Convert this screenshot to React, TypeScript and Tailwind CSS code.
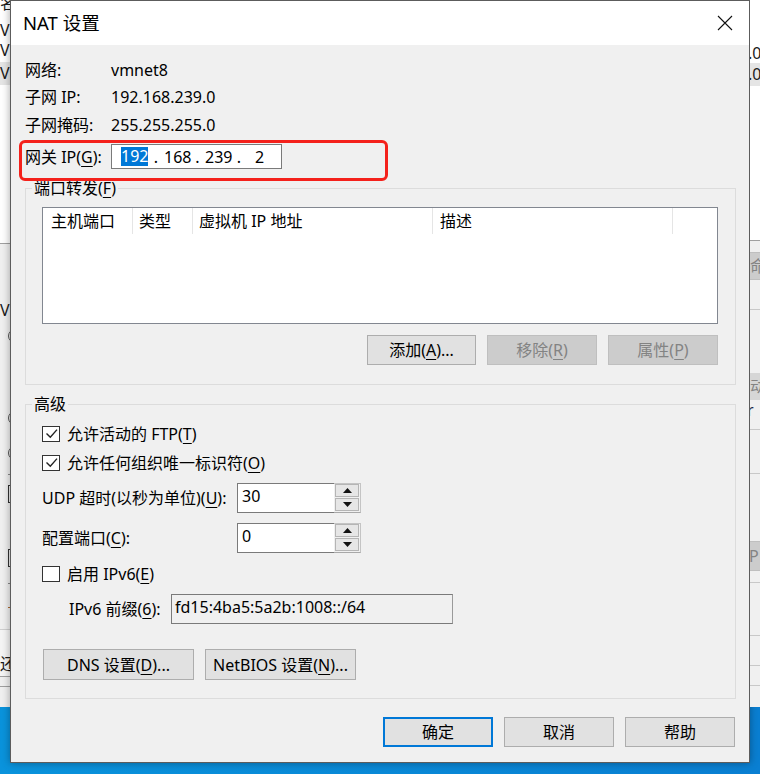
import React from 'react'

function Key({ children }: { children: React.ReactNode }) {
  return <u className="underline underline-offset-[3px] decoration-1">{children}</u>
}

function Check({ checked }: { checked?: boolean }) {
  return (
    <span className="w-[18px] h-[16px] border border-[#333333] bg-white flex items-center justify-center shrink-0">
      {checked && (
        <svg width="16" height="14" viewBox="0 0 16 14">
          <path d="M3.5 6.5 L7.3 10.3 L14 2.6" fill="none" stroke="#222222" strokeWidth="1.4" />
        </svg>
      )}
    </span>
  )
}

function Spin({ value }: { value: string }) {
  return (
    <div className="w-[124px] h-[30px] flex">
      <div className="flex-1 bg-white border-y border-l border-[#7a7a7a] pl-[4px] pt-[1px] leading-[22px]">
        {value}
      </div>
      <div className="w-[27px] border-y border-r border-[#c4c4c4] border-b-[#a8a8a8] bg-[#f0f0f0] flex flex-col gap-[1px] px-[1px]">
        <div className="h-[13px] w-[24px] bg-[#e6e6e6] border border-[#b5b5b5] flex items-center justify-center">
          <svg width="9" height="5" viewBox="0 0 9 5">
            <path d="M0 5 L4.5 0 L9 5 Z" fill="#111111" />
          </svg>
        </div>
        <div className="h-[13px] w-[24px] bg-[#e6e6e6] border border-[#b5b5b5] flex items-center justify-center">
          <svg width="9" height="5" viewBox="0 0 9 5">
            <path d="M0 0 L4.5 5 L9 0 Z" fill="#111111" />
          </svg>
        </div>
      </div>
    </div>
  )
}

function Radio() {
  return (
    <div className="h-[14px] flex items-center">
      <span className="ml-[8px] w-[14px] h-[14px] rounded-full border border-[#555555] shrink-0" />
    </div>
  )
}

function LeftStrip() {
  return (
    <div className="w-[10px] flex flex-col overflow-hidden text-[16px] text-[#1a1a1a] whitespace-nowrap">
      <div className="h-[243px] bg-white flex flex-col">
        <div className="h-[20px] overflow-hidden">
          <div className="leading-[20px] -mt-[7px]">名称</div>
        </div>
        <div className="h-[20px] leading-[20px]">VMnet0</div>
        <div className="h-[20px] leading-[20px]">VMnet1</div>
        <div className="h-[2px]" />
        <div className="h-[23px] leading-[23px] bg-[#e5e5e5]">VMnet8</div>
      </div>
      <div className="h-[464px] bg-[#f0f0f0] border-t border-[#a0a0a0] flex flex-col">
        <div className="h-[56px]" />
        <div className="h-[20px] leading-[20px]">VMnet</div>
        <div className="h-[9px]" />
        <Radio />
        <div className="h-[68px]" />
        <Radio />
        <div className="h-[21px]" />
        <Radio />
        <div className="h-[14px]" />
        <div className="h-[1px] ml-[8px] w-[4px] bg-[#8a8a8a]" />
        <div className="h-[10px]" />
        <div className="h-[18px] ml-[8px] w-[6px] border border-[#333333]" />
        <div className="h-[46px]" />
        <div className="h-[18px] ml-[8px] w-[6px] border border-[#333333]" />
        <div className="h-[16px]" />
        <div className="h-[1px] ml-[8px] w-[4px] bg-[#8a8a8a]" />
        <div className="h-[23px]" />
        <div className="h-[1px] ml-[8px] w-[4px] bg-[#b06a30]" />
        <div className="h-[21px]" />
        <div className="h-[48px] bg-[#f5f5f5] border-t border-[#cfcfcf] border-b border-b-[#a0a0a0] flex items-center">
          <span className="leading-[20px] mt-[22px]">还原</span>
        </div>
        <div className="h-[10px] border-b border-[#a0a0a0]" />
      </div>
    </div>
  )
}

function RightStrip() {
  return (
    <div className="w-[10px] flex flex-col overflow-hidden text-[16px] text-[#1a1a1a] whitespace-nowrap">
      <div className="h-[240px] bg-white flex flex-col">
        <div className="h-[43px]" />
        <div className="h-[20px] leading-[20px] -ml-[2px]">.0</div>
        <div className="h-[23px] leading-[23px] -ml-[2px] bg-[#e5e5e5]">.0</div>
      </div>
      <div className="h-[467px] bg-[#f0f0f0] border-t border-[#a0a0a0] flex flex-col">
        <div className="h-[11px]" />
        <div className="h-[28px] bg-[#cccccc] border-y border-[#bfbfbf] text-[#838383] leading-[26px]">命令</div>
        <div className="h-[30px] border-b border-[#c8c8c8]" />
        <div className="h-[63px]" />
        <div className="h-[27px] bg-[#d6d6d6] text-[#838383] leading-[27px]">动作</div>
        <div className="h-[20px] leading-[20px] text-[#1b2a4a] -ml-[3px]">r</div>
        <div className="h-[10px] border-b border-[#c8c8c8]" />
        <div className="h-[44px] border-b border-[#c8c8c8]" />
        <div className="h-[67px]" />
        <div className="h-[30px] bg-[#cccccc] border-y border-[#bfbfbf] text-[#838383] leading-[28px] -ml-[1px]">P</div>
        <div className="h-[12px] border-b border-[#c8c8c8]" />
        <div className="h-[53px] border-b border-[#c8c8c8]" />
        <div className="h-[30px] border-b border-[#c8c8c8]" />
        <div className="h-[20px] border-b border-[#c8c8c8]" />
      </div>
    </div>
  )
}

function Dialog() {
  return (
    <div className="w-[740px] h-[763px] border border-[#5c5c5c] flex flex-col bg-[#f0f0f0] shadow-[0_0_8px_rgba(0,0,0,0.35)]">
      {/* title bar */}
      <div className="h-[44px] bg-white flex items-center justify-between shrink-0">
        <div className="pl-[12px] text-[18.5px] leading-[24px] text-black">NAT 设置</div>
        <svg className="mr-[16px]" width="16" height="16" viewBox="0 0 16 16">
          <path d="M1 1 L15 15 M15 1 L1 15" stroke="#111111" strokeWidth="1.1" fill="none" />
        </svg>
      </div>

      <div className="flex-1 px-[14px] pt-[12px] text-[16px] leading-[20px] text-black">
        <div className="h-[26px] flex items-center">
          <span className="w-[86px]">网络:</span>
          <span>vmnet8</span>
        </div>
        <div className="h-[26px] mt-[1px] flex items-center">
          <span className="w-[86px]">子网 IP:</span>
          <span>192.168.239.0</span>
        </div>
        <div className="h-[26px] mt-[2px] flex items-center">
          <span className="w-[86px]">子网掩码:</span>
          <span>255.255.255.0</span>
        </div>

        <div className="relative h-[25px] mt-[6px] flex items-center">
          <span className="w-[86px]">
            网关 IP(<Key>G</Key>):
          </span>
          <div className="w-[171px] h-[25px] bg-white border border-[#7a7a7a] pl-[9px] flex items-center">
            <span className="w-[27px] h-[19px] bg-[#0078d7] text-white text-center leading-[19px]">192</span>
            <span className="w-[16px] text-center">.</span>
            <span className="w-[26px] text-center">168</span>
            <span className="w-[15px] text-center">.</span>
            <span className="w-[27px] text-center">239</span>
            <span className="w-[14px] text-center">.</span>
            <span className="w-[27px] text-center">2</span>
          </div>
          <div className="absolute left-[-6px] top-[-4px] w-[369px] h-[41px] border-[3px] border-[#f4211b] rounded-[6px]" />
        </div>

        {/* port forwarding */}
        <fieldset className="mt-[9px] w-[711px] border border-[#dcdcdc] pb-[19px]">
          <legend className="ml-[6px] px-[2px] leading-[20px]">
            端口转发(<Key>F</Key>)
          </legend>
          <div className="mt-[9px] ml-[16px] w-[676px] h-[117px] bg-white border border-[#828790]">
            <div className="h-[26px] flex">
              <div className="w-[90px] pl-[8px] pt-[3px] border-r border-[#e5e5e5]">主机端口</div>
              <div className="w-[60px] pl-[6px] pt-[3px] border-r border-[#e5e5e5]">类型</div>
              <div className="w-[240px] pl-[6px] pt-[3px] border-r border-[#e5e5e5]">虚拟机 IP 地址</div>
              <div className="w-[240px] pl-[7px] pt-[3px] border-r border-[#e5e5e5]">描述</div>
            </div>
          </div>
          <div className="mt-[11px] pr-[17px] flex justify-end gap-[11px]">
            <div className="w-[109px] h-[30px] bg-[#e1e1e1] border border-[#adadad] flex items-center justify-center">
              <span>
                添加(<Key>A</Key>)...
              </span>
            </div>
            <div className="w-[110px] h-[30px] bg-[#cccccc] border border-[#bfbfbf] text-[#838383] flex items-center justify-center">
              <span>
                移除(<Key>R</Key>)
              </span>
            </div>
            <div className="w-[110px] h-[30px] bg-[#cccccc] border border-[#bfbfbf] text-[#838383] flex items-center justify-center">
              <span>
                属性(<Key>P</Key>)
              </span>
            </div>
          </div>
        </fieldset>

        {/* advanced */}
        <fieldset className="mt-[9px] w-[711px] border border-[#dcdcdc] pb-[18px]">
          <legend className="ml-[6px] px-[2px] leading-[20px]">高级</legend>

          <div className="mt-[9px] h-[22px] pl-[16px] flex items-center gap-[7px]">
            <Check checked />
            <span>
              允许活动的 FTP(<Key>T</Key>)
            </span>
          </div>
          <div className="mt-[7px] h-[22px] pl-[16px] flex items-center gap-[7px]">
            <Check checked />
            <span>
              允许任何组织唯一标识符(<Key>O</Key>)
            </span>
          </div>

          <div className="mt-[9px] h-[30px] pl-[16px] flex items-center">
            <span className="w-[195px]">
              UDP 超时(以秒为单位)(<Key>U</Key>):
            </span>
            <Spin value="30" />
          </div>
          <div className="mt-[10px] h-[30px] pl-[16px] flex items-center">
            <span className="w-[195px]">
              配置端口(<Key>C</Key>):
            </span>
            <Spin value="0" />
          </div>

          <div className="mt-[10px] h-[22px] pl-[16px] flex items-center gap-[7px]">
            <Check />
            <span>
              启用 IPv6(<Key>E</Key>)
            </span>
          </div>

          <div className="mt-[9px] h-[30px] pl-[43px] flex items-center">
            <span className="w-[102px]">
              IPv6 前缀(<Key>6</Key>):
            </span>
            <div className="w-[282px] h-[30px] bg-[#f0f0f0] border border-[#7a7a7a] border-r-[#9a9a9a] pl-[3px] pt-[2px]">
              fd15:4ba5:5a2b:1008::/64
            </div>
          </div>

          <div className="mt-[25px] pl-[17px] flex gap-[11px]">
            <div className="w-[151px] h-[31px] bg-[#e1e1e1] border border-[#adadad] flex items-center justify-center">
              <span>
                DNS 设置(<Key>D</Key>)...
              </span>
            </div>
            <div className="w-[151px] h-[31px] bg-[#e1e1e1] border border-[#adadad] flex items-center justify-center">
              <span>
                NetBIOS 设置(<Key>N</Key>)...
              </span>
            </div>
          </div>
        </fieldset>

        <div className="mt-[18px] flex justify-end gap-[11px]">
          <div className="w-[110px] h-[30px] bg-[#e1e1e1] border-2 border-[#0078d7] flex items-center justify-center">确定</div>
          <div className="w-[110px] h-[30px] bg-[#e1e1e1] border border-[#adadad] flex items-center justify-center">取消</div>
          <div className="w-[110px] h-[30px] bg-[#e1e1e1] border border-[#adadad] flex items-center justify-center">帮助</div>
        </div>
      </div>
    </div>
  )
}

export default function App() {
  return (
    <div className="w-[760px] h-[774px] overflow-hidden flex flex-col bg-gradient-to-r from-[#0a93dc] to-[#0a7fd2] font-['Noto_Sans','Noto_Sans_CJK_SC',sans-serif]">
      <div className="h-[763px] flex shrink-0">
        <LeftStrip />
        <Dialog />
        <RightStrip />
      </div>
      <div className="flex-1" />
    </div>
  )
}
